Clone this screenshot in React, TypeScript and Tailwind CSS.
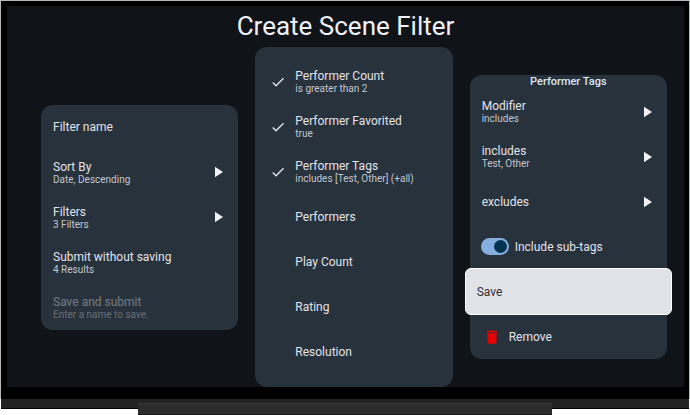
import { useState } from "react";
import type { ReactNode } from "react";

type RowProps = {
  title: string;
  detail?: string;
  leading?: ReactNode;
  arrow?: boolean;
  disabled?: boolean;
};

function CheckIcon() {
  return (
    <svg viewBox="0 0 24 24" className="size-4" fill="#dfe5ee" aria-hidden="true">
      <path d="M9 16.17 4.83 12l-1.42 1.41L9 19 21 7l-1.41-1.41z" />
    </svg>
  );
}

function ArrowIcon() {
  return (
    <svg viewBox="0 0 8 12" className="h-3 w-2 shrink-0" fill="#f1f1f6" aria-hidden="true">
      <path d="M0 0.800v10.400L8 6z" />
    </svg>
  );
}

function TrashIcon() {
  return (
    <svg viewBox="0 0 24 24" className="size-[18px]" fill="#e60000" aria-hidden="true">
      <path d="M6 19c0 1.100.9 2 2 2h8c1.100 0 2-.9 2-2V7H6v12zM19 4h-3.500l-1-1h-5l-1 1H5v2h14V4z" />
    </svg>
  );
}

function Row({ title, detail, leading, arrow, disabled }: RowProps) {
  return (
    <button
      type="button"
      disabled={disabled}
      className="flex h-[45px] w-full items-center px-3 text-left text-[#e2e2e9] disabled:opacity-40"
    >
      {leading !== undefined && (
        <span className="flex w-[28px] shrink-0 items-center pl-[3px]">{leading}</span>
      )}
      <span className="flex min-w-0 flex-1 flex-col">
        <span className="text-[12px] leading-[14px]">{title}</span>
        {detail && (
          <span className="text-[10px] leading-[11px] text-[#c3c6cf]">{detail}</span>
        )}
      </span>
      {arrow && (
        <span className="pr-[3px]">
          <ArrowIcon />
        </span>
      )}
    </button>
  );
}

function Panel({ label, className = "", children }: { label: string; className?: string; children: ReactNode }) {
  return (
    <section aria-label={label} className={`min-w-0 flex-1 rounded-xl bg-[#28323c] ${className}`}>
      {children}
    </section>
  );
}

const activeFilters = [
  { title: "Performer Count", detail: "is greater than 2" },
  { title: "Performer Favorited", detail: "true" },
  { title: "Performer Tags", detail: "includes [Test, Other] (+all)" },
];

const otherFilters = ["Performers", "Play Count", "Rating", "Resolution"];

export default function App() {
  const [subTags, setSubTags] = useState(true);

  return (
    <div className="bg-white font-[Roboto,sans-serif]">
      <div className="border-x border-t border-[#b4b8b6]">
        <main className="bg-black pt-[5px] pr-[5px] pb-3 pl-[6px]">
          <div className="bg-[#101418]">
            <h1 className="h-[41px] text-center text-[26px] leading-[41px] text-[#f0f1f6]">
              Create Scene Filter
            </h1>
            <div className="flex items-center gap-[17px] pr-[17px] pl-[34px]">
              <Panel label="Scene filter">
                <Row title="Filter name" />
                <Row title="Sort By" detail="Date, Descending" arrow />
                <Row title="Filters" detail="3 Filters" arrow />
                <Row title="Submit without saving" detail="4 Results" />
                <Row title="Save and submit" detail="Enter a name to save." disabled />
              </Panel>

              <Panel label="Filters" className="pt-3 pb-[13px]">
                {activeFilters.map((f) => (
                  <Row key={f.title} title={f.title} detail={f.detail} leading={<CheckIcon />} />
                ))}
                {otherFilters.map((name) => (
                  <Row key={name} title={name} leading={null} />
                ))}
              </Panel>

              <Panel label="Performer Tags">
                <h2 className="h-[14px] text-center text-[11px] leading-[14px] font-medium text-[#dce7f6]">
                  Performer Tags
                </h2>
                <Row title="Modifier" detail="includes" arrow />
                <Row title="includes" detail="Test, Other" arrow />
                <Row title="excludes" arrow />
                <label className="flex h-[45px] items-center gap-[6px] px-[11px] text-[12px] text-[#e2e2e9]">
                  <input
                    type="checkbox"
                    role="switch"
                    checked={subTags}
                    onChange={(e) => setSubTags(e.target.checked)}
                    className="flex h-[17px] w-7 shrink-0 appearance-none items-center rounded-full bg-[#42474e] px-[2px] before:size-[13px] before:rounded-full before:bg-[#8c9199] checked:justify-end checked:bg-[#84afdf] checked:before:bg-[#00344f]"
                  />
                  Include sub-tags
                </label>
                <button
                  type="button"
                  className="-mx-[5px] -my-px flex h-[47px] w-[calc(100%+10px)] items-center rounded-md border border-white bg-[#e2e2e9] px-[11px] text-left text-[12px] text-[#2e3036]"
                >
                  Save
                </button>
                <button
                  type="button"
                  className="flex h-[45px] w-full items-center gap-2 px-[13px] text-left text-[12px] text-[#e2e2e9]"
                >
                  <TrashIcon />
                  Remove
                </button>
              </Panel>
            </div>
          </div>
        </main>
      </div>
      <footer className="relative h-4">
        <div className="mx-px h-[10px] border-b border-black bg-[#222222]" />
        <div className="absolute inset-x-[20%] top-1 bottom-0 border-y border-t-[#3a3a3a] border-b-[#181818] bg-[#2c2c2c]" />
      </footer>
    </div>
  );
}
